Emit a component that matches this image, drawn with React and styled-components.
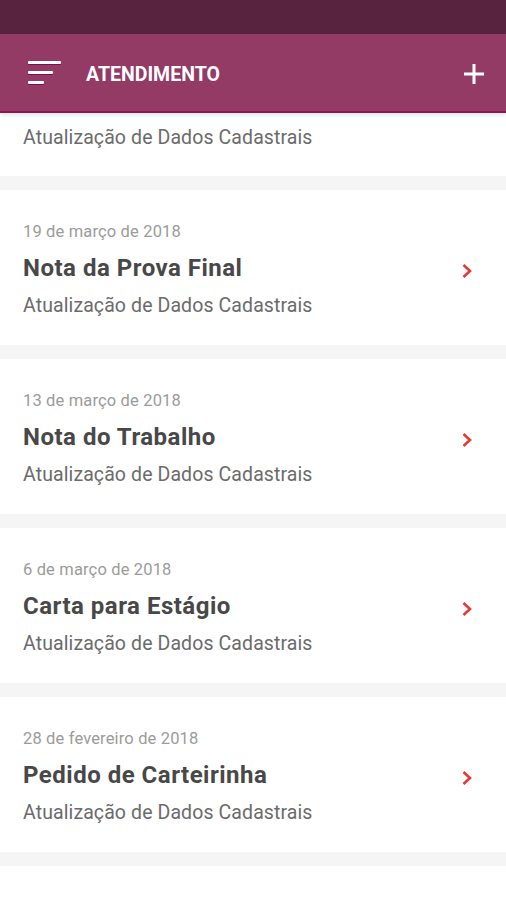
import React from "react";
import styled, { createGlobalStyle } from "styled-components";

const GlobalStyle = createGlobalStyle`
  html, body {
    margin: 0;
    padding: 0;
    background: #f5f5f5;
  }
  body {
    font-family: Roboto, "Noto Sans", "Liberation Sans", sans-serif;
    -webkit-font-smoothing: antialiased;
  }
`;

const Screen = styled.div`
  width: 506px;
  height: 900px;
  overflow: hidden;
  display: flex;
  flex-direction: column;
  background: #f5f5f5;
`;

const StatusBar = styled.div`
  height: 34px;
  flex-shrink: 0;
  background: #58233f;
`;

const AppBar = styled.header`
  position: relative;
  z-index: 2;
  height: 77px;
  flex-shrink: 0;
  display: flex;
  align-items: center;
  padding: 0 20px 0 28px;
  background: #933a65;
  border-bottom: 2px solid #8a1656;
  box-shadow: 0 2px 4px rgba(0, 0, 0, 0.12);
`;

const MenuButton = styled.button`
  display: flex;
  flex-direction: column;
  gap: 7px;
  padding: 0;
  border: 0;
  background: none;
  margin-right: 25px;
`;

const MenuLine = styled.span`
  display: block;
  height: 3px;
  width: ${(p) => p.$w}px;
  background: #fff;
  border-radius: 1px;
  box-shadow: 0 1px 0 #7a0f4c;
`;

const Title = styled.h1`
  flex: 1;
  margin: 3px 0 0;
  font-size: 19.5px;
  font-weight: 700;
  color: #fff;
  letter-spacing: 0;
`;

const AddButton = styled.button`
  width: 24px;
  height: 24px;
  margin-top: 3px;
  padding: 0;
  border: 0;
  background: none;
  display: flex;
  align-items: center;
  justify-content: center;
`;

const List = styled.main`
  display: flex;
  flex-direction: column;
  gap: 14px;
  padding-bottom: 14px;
`;

const Card = styled.div`
  background: #fff;
  display: flex;
  align-items: center;
  padding: ${(p) => (p.$clipped ? "13px 33px 26px 23px" : "32px 33px 27px 23px")};
`;

const CardBody = styled.div`
  flex: 1;
  display: flex;
  flex-direction: column;
`;

const DateText = styled.div`
  font-size: 16.5px;
  line-height: 20px;
  color: #9b9b9b;
  letter-spacing: 0.15px;
  margin-bottom: 11px;
`;

const ItemTitle = styled.div`
  font-size: 24px;
  line-height: 30px;
  font-weight: 700;
  color: #484848;
  letter-spacing: 0.5px;
  margin-bottom: 11px;
`;

const Subtitle = styled.div`
  font-size: 19.5px;
  line-height: 24px;
  color: #6b6b6b;
  letter-spacing: 0.1px;
`;

const Chevron = styled.svg`
  flex-shrink: 0;
  margin-top: 2px;
`;

const items = [
  { date: "19 de março de 2018", title: "Nota da Prova Final" },
  { date: "13 de março de 2018", title: "Nota do Trabalho" },
  { date: "6 de março de 2018", title: "Carta para Estágio" },
  { date: "28 de fevereiro de 2018", title: "Pedido de Carteirinha" },
  { date: "23 de fevereiro de 2018", title: "Declaração de Matrícula" },
];

const SUB = "Atualização de Dados Cadastrais";

function App() {
  return (
    <>
      <GlobalStyle />
      <Screen>
        <StatusBar />
        <AppBar>
          <MenuButton aria-label="menu">
            <MenuLine $w={33} />
            <MenuLine $w={25} />
            <MenuLine $w={16} />
          </MenuButton>
          <Title>ATENDIMENTO</Title>
          <AddButton aria-label="novo">
            <svg width="22" height="22" viewBox="0 0 22 22">
              <path d="M11 1v20M1 11h20" stroke="#fff" strokeWidth="3" />
            </svg>
          </AddButton>
        </AppBar>
        <List>
          <Card $clipped>
            <CardBody>
              <Subtitle>{SUB}</Subtitle>
            </CardBody>
          </Card>
          {items.map((it) => (
            <Card key={it.title}>
              <CardBody>
                <DateText>{it.date}</DateText>
                <ItemTitle>{it.title}</ItemTitle>
                <Subtitle>{SUB}</Subtitle>
              </CardBody>
              <Chevron width="12" height="16" viewBox="0 0 12 16">
                <path d="M2.5 2l6.5 6-6.5 6" fill="none" stroke="#e53935" strokeWidth="2.6" />
              </Chevron>
            </Card>
          ))}
        </List>
      </Screen>
    </>
  );
}

export default App;
